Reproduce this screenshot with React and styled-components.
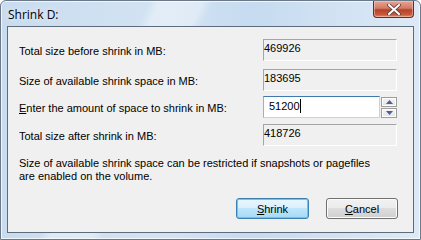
import React from "react";
import styled, { createGlobalStyle } from "styled-components";

const Global = createGlobalStyle`
  html, body {
    margin: 0;
    padding: 0;
    background: #fff;
  }
  body {
    font-family: "Liberation Sans", Arial, sans-serif;
  }
`;

const Window = styled.div`
  width: 421px;
  height: 240px;
  box-sizing: border-box;
  border: 1px solid #6b7887;
  border-radius: 6px 6px 0 0;
  display: flex;
  flex-direction: column;
  background:
    linear-gradient(115deg, transparent 0 28%, rgba(255, 255, 255, 0.35) 30% 38%, transparent 40% 100%),
    linear-gradient(90deg, #c9dcef 0%, #d3e3f3 40%, #c6dbf0 60%, #dde9f6 100%);
  box-shadow: inset 0 0 0 1px rgba(255, 255, 255, 0.7);
  overflow: hidden;
`;

const TitleBar = styled.div`
  height: 25px;
  display: flex;
  align-items: flex-start;
  justify-content: space-between;
  padding-left: 7px;
`;

const Title = styled.div`
  font-family: "Open Sans", "Liberation Sans", sans-serif;
  font-size: 12px;
  color: #000;
  margin-top: 5px;
  text-shadow: 0 0 6px rgba(255, 255, 255, 0.9);
`;

const CloseBtn = styled.div`
  width: 41px;
  height: 17px;
  margin-right: 6px;
  box-sizing: border-box;
  border: 1px solid #6e2a22;
  border-top: none;
  border-radius: 0 0 4px 4px;
  background: linear-gradient(180deg, #e8a493 0%, #d47a65 45%, #b8402a 55%, #c75a3e 85%, #e08f6a 100%);
  box-shadow: inset 0 0 0 1px rgba(255, 220, 210, 0.45);
  display: flex;
  align-items: center;
  justify-content: center;
`;

const Client = styled.div`
  flex: 1;
  margin: 0 6px 6px 6px;
  border: 1px solid #5d6b7a;
  background: #f0f0f0;
  padding: 12px 15px 0 11px;
  display: flex;
  flex-direction: column;
  font-size: 11px;
  color: #000;
`;

const Row = styled.div`
  display: flex;
  align-items: center;
  height: 22px;
  margin-top: ${({ gap }) => gap || 0}px;
`;

const Label = styled.div`
  width: 244px;
  padding-top: 2px;
`;

const Field = styled.div`
  width: 134px;
  height: 22px;
  box-sizing: border-box;
  border: 1px solid;
  border-color: #a5a5a5 #fff #fff #a5a5a5;
  padding: 2px 0 0 0;
  line-height: 13px;
`;

const SpinInput = styled.div`
  width: 117px;
  height: 22px;
  box-sizing: border-box;
  background: #fff;
  border: 1px solid;
  border-color: #3d7bad #b7d9ed #b7d9ed #abadb3;
  padding: 3px 0 0 5px;
  line-height: 13px;
  display: flex;
`;

const Caret = styled.span`
  display: inline-block;
  width: 1px;
  height: 14px;
  background: #000;
  margin-top: -1px;
`;

const Spin = styled.div`
  display: flex;
  flex-direction: column;
  gap: 1px;
  margin-left: 1px;
`;

const SpinBtn = styled.div`
  width: 16px;
  height: 10px;
  box-sizing: border-box;
  border: 1px solid #9d9d9d;
  background: linear-gradient(180deg, #f4f4f4 0%, #e4e4e4 100%);
  box-shadow: inset 0 0 0 1px #fff;
  display: flex;
  align-items: center;
  justify-content: center;
`;

const Note = styled.div`
  margin-top: 11px;
  line-height: 13px;
`;

const Buttons = styled.div`
  margin-top: 15px;
  display: flex;
  justify-content: flex-end;
  gap: 17px;
`;

const Button = styled.div`
  width: ${({ w }) => w}px;
  height: 21px;
  box-sizing: border-box;
  border-radius: 3px;
  border: 1px solid ${({ primary }) => (primary ? "#3c7fb1" : "#707070")};
  background: ${({ primary }) =>
    primary
      ? "linear-gradient(180deg, #eaf6fd 0%, #d9f0fc 49%, #bee6fd 50%, #a7d9f5 100%)"
      : "linear-gradient(180deg, #f2f2f2 0%, #ebebeb 49%, #dddddd 50%, #cfcfcf 100%)"};
  box-shadow: inset 0 0 0 1px ${({ primary }) => (primary ? "#48d7f5" : "#fcfcfc")};
  display: flex;
  align-items: center;
  justify-content: center;
  font-size: 11px;
`;

const U = styled.span`
  text-decoration: underline;
`;

function Arrow({ up }) {
  return (
    <svg width="7" height="4" viewBox="0 0 7 4">
      <polygon points={up ? "3.5,0 7,4 0,4" : "0,0 7,0 3.5,4"} fill="#4a5f9a" />
    </svg>
  );
}

export default function App() {
  return (
    <>
      <Global />
      <Window>
        <TitleBar>
          <Title>Shrink D:</Title>
          <CloseBtn>
            <svg width="14" height="11" viewBox="0 0 14 11">
              <path
                d="M2 1 L12 10 M12 1 L2 10"
                stroke="#5a3a36"
                strokeWidth="3.6"
                strokeLinecap="round"
              />
              <path
                d="M2 1 L12 10 M12 1 L2 10"
                stroke="#fff"
                strokeWidth="2"
                strokeLinecap="round"
              />
            </svg>
          </CloseBtn>
        </TitleBar>
        <Client>
          <Row>
            <Label>Total size before shrink in MB:</Label>
            <Field>469926</Field>
          </Row>
          <Row gap={8}>
            <Label>Size of available shrink space in MB:</Label>
            <Field>183695</Field>
          </Row>
          <Row gap={5}>
            <Label>
              <U>E</U>nter the amount of space to shrink in MB:
            </Label>
            <SpinInput>
              51200
              <Caret />
            </SpinInput>
            <Spin>
              <SpinBtn>
                <Arrow up />
              </SpinBtn>
              <SpinBtn>
                <Arrow />
              </SpinBtn>
            </Spin>
          </Row>
          <Row gap={6}>
            <Label>Total size after shrink in MB:</Label>
            <Field>418726</Field>
          </Row>
          <Note>
            Size of available shrink space can be restricted if snapshots or pagefiles
            <br />
            are enabled on the volume.
          </Note>
          <Buttons>
            <Button w={73} primary>
              <span>
                <U>S</U>hrink
              </span>
            </Button>
            <Button w={72}>
              <span>
                <U>C</U>ancel
              </span>
            </Button>
          </Buttons>
        </Client>
      </Window>
    </>
  );
}
